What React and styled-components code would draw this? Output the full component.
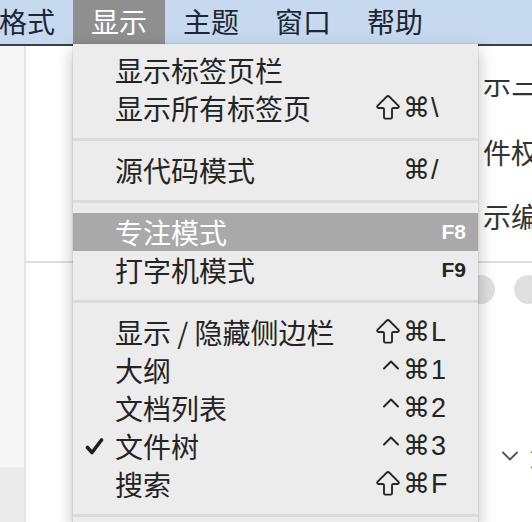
import React from 'react';
import styled, { createGlobalStyle } from 'styled-components';
import { ChevronDown, ChevronUp, ArrowBigUp } from 'lucide-react';

const GlobalStyle = createGlobalStyle`
  html, body {
    margin: 0;
    padding: 0;
    background: #fff;
    overflow: hidden;
  }
  body {
    font-family: "Noto Sans CJK SC", "Noto Sans", sans-serif;
  }
`;

const Screen = styled.div`
  position: relative;
  display: flex;
  flex-direction: column;
  width: 532px;
  height: 522px;
  overflow: hidden;
  background: #fff;
`;

const MenuBar = styled.div`
  flex: 0 0 auto;
  height: 44px;
  background: #c6d9ef;
  border-bottom: 2px solid #363f4d;
  overflow: hidden;
`;

const BarItems = styled.div`
  display: flex;
  height: 100%;
  margin-left: -19px;
`;

const BarItem = styled.div`
  display: flex;
  align-items: center;
  padding: 0 18px 2px;
  font-size: 28px;
  line-height: 42px;
  color: ${p => (p.$active ? '#fff' : '#1c2635')};
  background: ${p => (p.$active ? '#8f8f8f' : 'transparent')};
`;

const Workspace = styled.div`
  flex: 1;
  display: flex;
  min-height: 0;
`;

const Sidebar = styled.div`
  flex: 0 0 24px;
  display: flex;
  flex-direction: column;
  border-right: 2px solid #e3e3e3;
`;

const SidebarTop = styled.div`
  flex: 1;
  background: #f7f7f7;
`;

const SidebarBottom = styled.div`
  flex: 0 0 55px;
  background: #ebebeb;
`;

const Editor = styled.div`
  flex: 1;
  display: flex;
  flex-direction: column;
  min-width: 0;
  overflow: hidden;
  background: #fff;
`;

const DocColumn = styled.div`
  display: flex;
  flex-direction: column;
  margin-left: 457px;
  white-space: nowrap;
  color: #333;
  font-size: 28px;
`;

const ClipLine = styled.div`
  display: flex;
  align-items: flex-end;
  height: 17px;
  margin-top: 34px;
  overflow: hidden;
  line-height: 28px;
`;

const DocLine = styled.div`
  line-height: 28px;
  margin-top: ${p => p.$gap}px;
`;

const Rule = styled.div`
  height: 2px;
  margin-top: 31px;
  background: #dedede;
`;

const ToolRow = styled.div`
  display: flex;
  gap: 19px;
  width: max-content;
  padding-left: 56px;
  margin-top: 12px;
`;

const ToolDot = styled.div`
  flex: 0 0 29px;
  height: 29px;
  border-radius: 50%;
  background: #dfdfdf;
`;

const TreeRow = styled.div`
  display: flex;
  align-items: center;
  gap: 6px;
  width: max-content;
  margin-left: 470px;
  margin-top: 140px;
  height: 24px;
  color: #555;
  font-size: 22px;
  white-space: nowrap;

  svg {
    flex-shrink: 0;
  }
`;

const Dropdown = styled.div`
  position: absolute;
  top: 44px;
  left: 73px;
  width: 405px;
  padding-top: 7px;
  background: #ececec;
  box-shadow: 0 0 0 1px rgba(0, 0, 0, 0.06), 0 6px 16px rgba(0, 0, 0, 0.26);
`;

const Row = styled.div`
  display: grid;
  grid-template-columns: 42px 1fr auto 35px;
  grid-template-rows: 38px;
  align-items: center;
  height: 38px;
  padding-right: 12px;
  overflow: hidden;
  color: ${p => (p.$active ? '#fff' : '#242424')};
  background: ${p => (p.$active ? '#a9a9a9' : 'transparent')};
`;

const CheckCell = styled.div`
  display: flex;
  justify-content: center;
  align-items: center;
`;

const Label = styled.div`
  font-size: 28px;
  line-height: 38px;
  white-space: nowrap;
`;

const Mods = styled.div`
  display: flex;
  align-items: center;
  justify-content: flex-end;
  gap: 3px;
  height: 38px;
  padding-right: 1px;
  font-family: "DejaVu Sans", sans-serif;
  font-size: 27px;
  line-height: 38px;

  svg {
    flex-shrink: 0;
  }
`;

const ShiftIcon = styled(ArrowBigUp)`
  margin: 0 -4px 0 -6px;
`;

const CtrlIcon = styled(ChevronUp)`
  margin: 0 -5px 0 -7px;
  transform: translateY(-5px);
`;

const Key = styled.div`
  font-family: "Liberation Sans", Arial, sans-serif;
  font-size: ${p => (p.$fn ? 21 : 27)}px;
  font-weight: ${p => (p.$fn ? 700 : 400)};
  line-height: 38px;
  text-align: ${p => (p.$fn ? 'right' : 'left')};
`;

const Separator = styled.div`
  height: 3px;
  margin: 11px 0 10px;
  background: #dbdbdb;
`;

const Check = () => (
  <svg width="19" height="19" viewBox="0 0 19 19">
    <path
      d="M2.5 10.5 L7 15.5 L16.5 3"
      fill="none"
      stroke="#1e1e1e"
      strokeWidth="3.6"
      strokeLinecap="round"
      strokeLinejoin="round"
    />
  </svg>
);

const Modifier = ({ name }) => {
  if (name === 'shift') return <ShiftIcon size={32} strokeWidth={1.4} />;
  if (name === 'ctrl') return <CtrlIcon size={28} strokeWidth={1.7} />;
  return <span>⌘</span>;
};

const menu = [
  [
    { label: '显示标签页栏' },
    { label: '显示所有标签页', mods: ['shift', 'cmd'], key: '\\' },
  ],
  [{ label: '源代码模式', mods: ['cmd'], key: '/' }],
  [
    { label: '专注模式', key: 'F8', fn: true, active: true },
    { label: '打字机模式', key: 'F9', fn: true },
  ],
  [
    { label: '显示 / 隐藏侧边栏', mods: ['shift', 'cmd'], key: 'L' },
    { label: '大纲', mods: ['ctrl', 'cmd'], key: '1' },
    { label: '文档列表', mods: ['ctrl', 'cmd'], key: '2' },
    { label: '文件树', mods: ['ctrl', 'cmd'], key: '3', checked: true },
    { label: '搜索', mods: ['shift', 'cmd'], key: 'F' },
  ],
];

const bar = ['格式', '显示', '主题', '窗口', '帮助'];

const App = () => {
  return (
    <Screen>
      <GlobalStyle />
      <MenuBar>
        <BarItems>
          {bar.map(name => (
            <BarItem key={name} $active={name === '显示'}>{name}</BarItem>
          ))}
        </BarItems>
      </MenuBar>
      <Workspace>
        <Sidebar>
          <SidebarTop />
          <SidebarBottom />
        </Sidebar>
        <Editor>
          <DocColumn>
            <ClipLine><span>示三</span></ClipLine>
            <DocLine $gap={41}>件权</DocLine>
            <DocLine $gap={36}>示编</DocLine>
          </DocColumn>
          <Rule />
          <ToolRow>
            {Array.from({ length: 10 }).map((_, i) => <ToolDot key={i} />)}
          </ToolRow>
          <TreeRow>
            <ChevronDown size={28} strokeWidth={1.6} color="#555" />
            <span>文件</span>
          </TreeRow>
        </Editor>
      </Workspace>

      <Dropdown>
        {menu.map((group, gi) => (
          <React.Fragment key={gi}>
            {group.map(item => (
              <Row key={item.label} $active={item.active}>
                <CheckCell>{item.checked && <Check />}</CheckCell>
                <Label>{item.label}</Label>
                <Mods>
                  {(item.mods || []).map(m => <Modifier key={m} name={m} />)}
                </Mods>
                <Key $fn={item.fn}>{item.key}</Key>
              </Row>
            ))}
            <Separator />
          </React.Fragment>
        ))}
      </Dropdown>
    </Screen>
  );
};

export default App;
